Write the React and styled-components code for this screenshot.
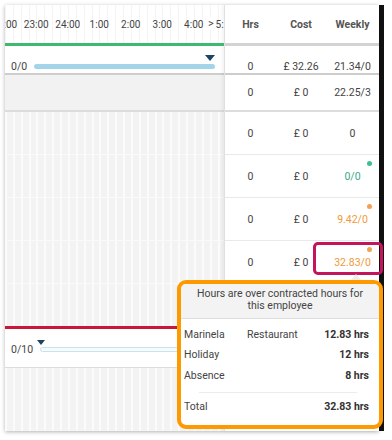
import React from 'react';
import styled, { createGlobalStyle } from 'styled-components';

const GlobalStyle = createGlobalStyle`
  html, body {
    margin: 0;
    padding: 0;
    background: #fff;
  }
  body {
    font-family: Roboto, "Liberation Sans", sans-serif;
    color: #444;
  }
`;

const Page = styled.div`
  display: flex;
  align-items: flex-start;
  width: 392px;
  height: 440px;
  padding: 5px 0 0 5px;
  box-sizing: border-box;
`;

const Card = styled.div`
  position: relative;
  display: flex;
  width: 374px;
  height: 426px;
  background: #fff;
  box-shadow: 0 1px 4px rgba(0, 0, 0, 0.3);
`;

const ScrollEdge = styled.div`
  width: 5px;
  height: 426px;
  background: #111;
`;

const stripes = `
  background-color: #f3f3f3;
  background-image: repeating-linear-gradient(
    90deg,
    #fbfbfb 0 2px,
    transparent 2px 7.875px
  );
`;

/* ---------- timeline side ---------- */

const Timeline = styled.div`
  display: flex;
  flex-direction: column;
  width: 219px;
  overflow: hidden;
`;

const TimeHeader = styled.div`
  position: relative;
  display: flex;
  align-items: center;
  height: 38px;
  border-bottom: 3px solid #3dba6e;
  background-image: repeating-linear-gradient(
    90deg,
    #f4f4f4 0 1px,
    transparent 1px 7.875px
  );
`;

const HourRow = styled.div`
  display: flex;
  margin-left: -16px;
  padding-top: 1px;
`;

const Hour = styled.span`
  flex: 0 0 31.5px;
  text-align: center;
  font-size: 10px;
  color: #444;
  white-space: nowrap;
`;

const NextArrow = styled.span`
  position: absolute;
  left: 202px;
  top: 12px;
  font-size: 11px;
  color: #444;
  background: #fff;
  padding: 0 1px;
`;

const LaneRow = styled.div`
  display: flex;
  align-items: center;
  height: ${(p) => p.$h}px;
  padding: ${(p) => p.$pad};
  box-sizing: content-box;
  background: ${(p) => p.$bg || '#fff'};
  border-bottom: ${(p) => p.$border || 'none'};
`;

const Ratio = styled.span`
  font-size: 10.5px;
  color: #444;
  line-height: 13px;
`;

const Track = styled.div`
  position: relative;
  flex: 1;
  height: ${(p) => (p.$outline ? 3 : 5)}px;
  margin-left: ${(p) => p.$gap}px;
  border-radius: 3px;
  background: ${(p) => (p.$outline ? '#f6fbfd' : '#a3d4e9')};
  border: ${(p) => (p.$outline ? '1px solid #c8e2ee' : 'none')};
`;

const Marker = styled.span`
  position: absolute;
  top: ${(p) => p.$top}px;
  ${(p) => (p.$side === 'left' ? 'left: -4px;' : 'right: 0;')}
  width: 0;
  height: 0;
  border-left: ${(p) => p.$w}px solid transparent;
  border-right: ${(p) => p.$w}px solid transparent;
  border-top: ${(p) => p.$hgt}px solid #1f4460;
`;

const GridBlock = styled.div`
  height: ${(p) => p.$h}px;
  ${stripes}
  border-bottom: ${(p) => (p.$line ? '1px solid #fafafa' : 'none')};
  box-sizing: border-box;
`;

const AlertLine = styled.div`
  height: 3px;
  background: #c8173a;
`;

const Filler = styled.div`
  flex: 1;
  ${stripes}
`;

/* ---------- totals side ---------- */

const Totals = styled.div`
  display: flex;
  flex-direction: column;
  width: 155px;
  border-left: 1px solid #e0e0e0;
  box-shadow: -2px 0 3px rgba(0, 0, 0, 0.05);
  box-sizing: border-box;
`;

const Grid = styled.div`
  display: grid;
  grid-template-columns: 51px 50px 1fr;
  height: ${(p) => p.$h}px;
  padding-top: ${(p) => p.$pt || 0}px;
  box-sizing: content-box;
  border-bottom: ${(p) => p.$border};
`;

const HeadCell = styled.div`
  display: flex;
  align-items: center;
  justify-content: center;
  font-size: 10.5px;
  font-weight: 700;
  color: #555;
  padding-top: 1px;
`;

const Cell = styled.div`
  position: relative;
  display: flex;
  align-items: center;
  justify-content: center;
  font-size: 10.5px;
  color: ${(p) => p.$tone || '#444'};
`;

const Dot = styled.span`
  position: absolute;
  top: 6px;
  right: 7px;
  width: 5px;
  height: 5px;
  border-radius: 50%;
  background: ${(p) => p.$color};
`;

const Highlight = styled.span`
  position: absolute;
  top: 1px;
  left: -13px;
  right: -4px;
  height: 33px;
  border: 3px solid #c4145c;
  border-radius: 5px;
  box-sizing: border-box;
  z-index: 2;
`;

/* ---------- tooltip ---------- */

const Tooltip = styled.div`
  position: absolute;
  left: 172px;
  top: 275px;
  width: 206px;
  height: 149px;
  border: 4px solid #ff9900;
  border-radius: 9px;
  background: #fff;
  box-sizing: border-box;
  z-index: 3;
  display: flex;
  flex-direction: column;
`;

const Caret = styled.span`
  position: absolute;
  top: -10px;
  left: 170px;
  width: 0;
  height: 0;
  border-left: 5px solid transparent;
  border-right: 5px solid transparent;
  border-bottom: 6px solid #ececec;
`;

const TipHead = styled.div`
  background: #f3f3f3;
  border-bottom: 1px solid #dedede;
  border-radius: 5px 5px 0 0;
  padding: 4px 8px 6px;
  text-align: center;
  font-size: 10.5px;
  line-height: 12px;
  color: #444;
`;

const TipBody = styled.div`
  display: flex;
  flex-direction: column;
  padding: 5px 10px 0 3px;
`;

const TipRow = styled.div`
  display: grid;
  grid-template-columns: 63px 1fr auto;
  align-items: center;
  height: 20.5px;
  font-size: 10.5px;
  color: #444;
`;

const TipValue = styled.span`
  font-weight: 700;
  color: #333;
  text-align: right;
`;

const TipRule = styled.div`
  height: 1px;
  margin: 6px 12px 4px 15px;
  background: #ececec;
`;

const hours = ['22:00', '23:00', '24:00', '1:00', '2:00', '3:00', '4:00', '5:00'];

const rows = [
  { hrs: '0', cost: '£ 0', weekly: '0' },
  { hrs: '0', cost: '£ 0', weekly: '0/0', tone: '#3aa887', dot: '#3cc08e' },
  { hrs: '0', cost: '£ 0', weekly: '9.42/0', tone: '#f09a3a', dot: '#f5a04c' },
  { hrs: '0', cost: '£ 0', weekly: '32.83/0', tone: '#f09a3a', dot: '#f5a04c', flagged: true },
];

const breakdown = [
  { name: 'Marinela', place: 'Restaurant', value: '12.83 hrs' },
  { name: 'Holiday', place: '', value: '12 hrs' },
  { name: 'Absence', place: '', value: '8 hrs' },
];

const App = () => {
  return (
    <Page>
      <GlobalStyle />
      <Card>
        <Timeline>
          <TimeHeader>
            <HourRow>
              {hours.map((h) => (
                <Hour key={h}>{h}</Hour>
              ))}
            </HourRow>
            <NextArrow>&gt;</NextArrow>
          </TimeHeader>

          <LaneRow $h={13} $pad="14px 9px 0 6px" $border="2px solid #cdcdcd">
            <Ratio>0/0</Ratio>
            <Track $gap={7}>
              <Marker $top={-9} $w={5} $hgt={6} />
            </Track>
          </LaneRow>

          <LaneRow $h={35} $pad="0" $bg="#f2f2f2" $border="2px solid #dcdcdc" />

          <GridBlock $h={43} $line />
          <GridBlock $h={43} $line />
          <GridBlock $h={43} $line />
          <GridBlock $h={43} $line />
          <GridBlock $h={42} />

          <AlertLine />

          <LaneRow $h={36} $pad="2px 0 0 6px" $border="1px solid #dcdcdc">
            <Ratio>0/10</Ratio>
            <Track $gap={7} $outline>
              <Marker $side="left" $top={-8} $w={4} $hgt={5} />
            </Track>
          </LaneRow>

          <Filler />
        </Timeline>

        <Totals>
          <Grid $h={38} $border="3px solid #d3d3d3">
            <HeadCell>Hrs</HeadCell>
            <HeadCell>Cost</HeadCell>
            <HeadCell>Weekly</HeadCell>
          </Grid>

          <Grid $h={13} $pt={14} $border="2px solid #cdcdcd">
            <Cell>0</Cell>
            <Cell>£ 32.26</Cell>
            <Cell>21.34/0</Cell>
          </Grid>

          <Grid $h={35} $border="2px solid #dcdcdc">
            <Cell>0</Cell>
            <Cell>£ 0</Cell>
            <Cell>22.25/3</Cell>
          </Grid>

          {rows.map((r, i) => (
            <Grid key={i} $h={42} $border="1px solid #e9e9e9">
              <Cell>{r.hrs}</Cell>
              <Cell>{r.cost}</Cell>
              <Cell $tone={r.tone}>
                {r.dot && <Dot $color={r.dot} />}
                {r.flagged && <Highlight />}
                {r.weekly}
              </Cell>
            </Grid>
          ))}
        </Totals>

        <Tooltip>
          <Caret />
          <TipHead>
            Hours are over contracted hours for
            <br />
            this employee
          </TipHead>
          <TipBody>
            {breakdown.map((b) => (
              <TipRow key={b.name}>
                <span>{b.name}</span>
                <span>{b.place}</span>
                <TipValue>{b.value}</TipValue>
              </TipRow>
            ))}
            <TipRule />
            <TipRow>
              <span>Total</span>
              <span />
              <TipValue>32.83 hrs</TipValue>
            </TipRow>
          </TipBody>
        </Tooltip>
      </Card>
      <ScrollEdge />
    </Page>
  );
};

export default App;
